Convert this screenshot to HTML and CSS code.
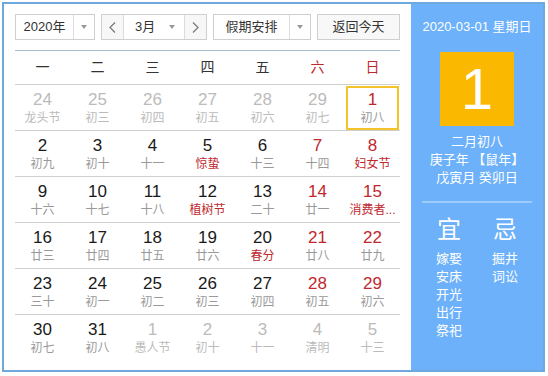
FILE: index.html
```html
<!DOCTYPE html>
<html lang="zh-CN">
<head>
<meta charset="utf-8">
<title>万年历</title>
<link rel="stylesheet" href="styles.css">
</head>
<body>
<div class="cal">
  <div class="main">
    <div class="toolbar">
      <div class="select year">
        <span class="sel-label">2020年</span>
        <span class="sel-arrow"><i class="tri"></i></span>
      </div>
      <div class="select month">
        <span class="nav-btn"><svg width="7" height="11" viewBox="0 0 7 11"><polyline points="6,0.5 1,5.5 6,10.5" fill="none" stroke="#777" stroke-width="1.2"/></svg></span>
        <span class="month-sel"><span class="month-label">3月</span><i class="tri"></i></span>
        <span class="nav-btn next"><svg width="7" height="11" viewBox="0 0 7 11"><polyline points="1,0.5 6,5.5 1,10.5" fill="none" stroke="#777" stroke-width="1.2"/></svg></span>
      </div>
      <div class="select holiday">
        <span class="sel-label">假期安排</span>
        <span class="sel-arrow"><i class="tri"></i></span>
      </div>
      <div class="btn-today">返回今天</div>
    </div>

    <div class="weekhead">
      <span>一</span><span>二</span><span>三</span><span>四</span><span>五</span><span class="red">六</span><span class="red">日</span>
    </div>

    <div class="week">
      <div class="day other"><b>24</b><em>龙头节</em></div>
      <div class="day other"><b>25</b><em>初三</em></div>
      <div class="day other"><b>26</b><em>初四</em></div>
      <div class="day other"><b>27</b><em>初五</em></div>
      <div class="day other"><b>28</b><em>初六</em></div>
      <div class="day other"><b>29</b><em>初七</em></div>
      <div class="day today weekend"><b>1</b><em>初八</em></div>
    </div>
    <div class="week">
      <div class="day"><b>2</b><em>初九</em></div>
      <div class="day"><b>3</b><em>初十</em></div>
      <div class="day"><b>4</b><em>十一</em></div>
      <div class="day"><b>5</b><em class="fest">惊蛰</em></div>
      <div class="day"><b>6</b><em>十三</em></div>
      <div class="day weekend"><b>7</b><em>十四</em></div>
      <div class="day weekend"><b>8</b><em class="fest">妇女节</em></div>
    </div>
    <div class="week">
      <div class="day"><b>9</b><em>十六</em></div>
      <div class="day"><b>10</b><em>十七</em></div>
      <div class="day"><b>11</b><em>十八</em></div>
      <div class="day"><b>12</b><em class="fest">植树节</em></div>
      <div class="day"><b>13</b><em>二十</em></div>
      <div class="day weekend"><b>14</b><em>廿一</em></div>
      <div class="day weekend"><b>15</b><em class="fest">消费者...</em></div>
    </div>
    <div class="week">
      <div class="day"><b>16</b><em>廿三</em></div>
      <div class="day"><b>17</b><em>廿四</em></div>
      <div class="day"><b>18</b><em>廿五</em></div>
      <div class="day"><b>19</b><em>廿六</em></div>
      <div class="day"><b>20</b><em class="fest">春分</em></div>
      <div class="day weekend"><b>21</b><em>廿八</em></div>
      <div class="day weekend"><b>22</b><em>廿九</em></div>
    </div>
    <div class="week">
      <div class="day"><b>23</b><em>三十</em></div>
      <div class="day"><b>24</b><em>初一</em></div>
      <div class="day"><b>25</b><em>初二</em></div>
      <div class="day"><b>26</b><em>初三</em></div>
      <div class="day"><b>27</b><em>初四</em></div>
      <div class="day weekend"><b>28</b><em>初五</em></div>
      <div class="day weekend"><b>29</b><em>初六</em></div>
    </div>
    <div class="week last">
      <div class="day"><b>30</b><em>初七</em></div>
      <div class="day"><b>31</b><em>初八</em></div>
      <div class="day other"><b>1</b><em>愚人节</em></div>
      <div class="day other"><b>2</b><em>初十</em></div>
      <div class="day other"><b>3</b><em>十一</em></div>
      <div class="day other"><b>4</b><em>清明</em></div>
      <div class="day other"><b>5</b><em>十三</em></div>
    </div>
  </div>

  <div class="side">
    <div class="side-date">2020-03-01 星期日</div>
    <div class="big-day">1</div>
    <div class="lunar">
      <div>二月初八</div>
      <div>庚子年 【鼠年】</div>
      <div>戊寅月 癸卯日</div>
    </div>
    <div class="side-sep"></div>
    <div class="yiji">
      <div class="yj-col">
        <div class="yj-title">宜</div>
        <div>嫁娶</div><div>安床</div><div>开光</div><div>出行</div><div>祭祀</div>
      </div>
      <div class="yj-col">
        <div class="yj-title">忌</div>
        <div>掘井</div><div>词讼</div>
      </div>
    </div>
  </div>
</div>
</body>
</html>
```
FILE: styles.css
```css
* { box-sizing: border-box; }
html, body { margin: 0; padding: 0; background: #fff; }
body {
  font-family: "Liberation Sans", "Noto Sans CJK SC", sans-serif;
  color: #333;
}
.cal {
  margin: 2px 0 0 2px;
  width: 543px;
  height: 370px;
  border: 2px solid #6fa8dc;
  display: flex;
}
.main {
  width: 407px;
  padding: 10px 11px 0 11px;
  background: #fff;
}
.toolbar {
  display: flex;
  gap: 6px;
  height: 26px;
}
.select {
  display: flex;
  height: 26px;
  border: 1px solid #cfcfcf;
  background: #fff;
  font-size: 13px;
  line-height: 24px;
  color: #333;
}
.year { width: 80px; }
.month { width: 106px; }
.holiday { width: 98px; }
.sel-label {
  flex: 1;
  text-align: center;
}
.sel-arrow {
  width: 21px;
  border-left: 1px solid #dcdcdc;
  display: flex;
  align-items: center;
  justify-content: center;
}
.tri {
  display: block;
  width: 0;
  height: 0;
  border-left: 3.5px solid transparent;
  border-right: 3.5px solid transparent;
  border-top: 4px solid #999;
}
.nav-btn {
  width: 22px;
  background: #f7f7f7;
  display: flex;
  align-items: center;
  justify-content: center;
  border-right: 1px solid #dcdcdc;
}
.nav-btn.next {
  border-right: none;
  border-left: 1px solid #dcdcdc;
}
.month-sel {
  flex: 1;
  display: flex;
  align-items: center;
  padding: 0 9px 0 11px;
  justify-content: space-between;
}
.btn-today {
  flex: 1;
  height: 26px;
  border: 1px solid #cfcfcf;
  background: #f8f8f8;
  font-size: 13px;
  line-height: 24px;
  text-align: center;
  color: #333;
}
.weekhead {
  margin-top: 10px;
  height: 35px;
  border-top: 1px solid #a7bdd1;
  border-bottom: 1px solid #cfcfcf;
  display: grid;
  grid-template-columns: repeat(7, 55px);
  font-size: 14px;
  line-height: 33px;
  text-align: center;
  color: #333;
}
.red { color: #c0282e; }
.week {
  display: grid;
  grid-template-columns: repeat(7, 55px);
  height: 46px;
  border-bottom: 1px solid #cfcfcf;
}
.week.last { border-bottom: none; }
.day {
  display: flex;
  flex-direction: column;
  align-items: center;
  padding-top: 5px;
}
.day b {
  font-weight: normal;
  font-size: 17px;
  line-height: 20px;
  color: #1a1a1a;
}
.day em {
  font-style: normal;
  font-size: 12px;
  line-height: 16px;
  color: #999;
  white-space: nowrap;
}
.day.weekend b { color: #c0282e; }
.day em.fest { color: #c0282e; }
.day.other b, .day.other em { color: #bbb; }
.day.today {
  outline: 2px solid #f3c42a;
  outline-offset: -2px;
  margin: 1px 1px 0 1px;
  padding-top: 4px;
}
.side {
  width: 132px;
  background: #6cb1f9;
  color: #fff;
  display: flex;
  flex-direction: column;
  align-items: center;
}
.side-date {
  margin-top: 13px;
  font-size: 13px;
  line-height: 20px;
}
.big-day {
  margin-top: 15px;
  width: 74px;
  height: 74px;
  background: #fbb800;
  font-size: 58px;
  line-height: 74px;
  text-align: center;
  color: #fff;
}
.lunar {
  margin-top: 7px;
  font-size: 13px;
  line-height: 18px;
  text-align: center;
}
.side-sep {
  margin-top: 14px;
  width: 110px;
  height: 2px;
  background: #9fcbfb;
}
.yiji {
  margin-top: 13px;
  display: flex;
  gap: 6px;
}
.yj-col {
  width: 50px;
  text-align: center;
  font-size: 13px;
  line-height: 18px;
}
.yj-title {
  font-size: 24px;
  line-height: 28px;
  margin-bottom: 6px;
}
```
